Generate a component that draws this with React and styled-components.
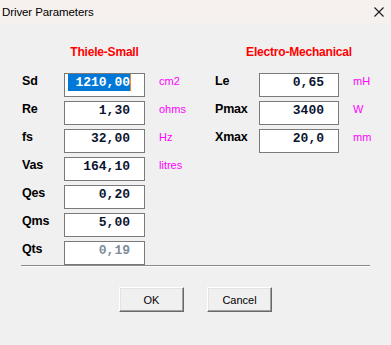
import React from "react";
import styled, { createGlobalStyle } from "styled-components";

const GlobalStyle = createGlobalStyle`
  html, body {
    margin: 0;
    padding: 0;
    background: #f0f0f0;
  }
`;

const leftParams = [
  { label: "Sd", value: " 1210,00", unit: "cm2", selected: true },
  { label: "Re", value: "    1,30", unit: "ohms" },
  { label: "fs", value: "   32,00", unit: "Hz" },
  { label: "Vas", value: "  164,10", unit: "litres" },
  { label: "Qes", value: "    0,20" },
  { label: "Qms", value: "    5,00" },
  { label: "Qts", value: "    0,19", muted: true },
];

const rightParams = [
  { label: "Le", value: "    0,65", unit: "mH" },
  { label: "Pmax", value: "    3400", unit: "W" },
  { label: "Xmax", value: "    20,0", unit: "mm" },
];

const App = () => {
  return (
    <Window>
      <GlobalStyle />
      <TitleBar>
        <Title>Driver Parameters</Title>
        <CloseIcon width="10" height="10" viewBox="0 0 10 10">
          <path d="M0.5 0.5 L9.5 9.5 M9.5 0.5 L0.5 9.5" stroke="#1a1a1a" strokeWidth="1.1" />
        </CloseIcon>
      </TitleBar>
      <Panels>
        <Section $width={193}>
          <Header $labelW={42} $boxW={81}>Thiele-Small</Header>
          {leftParams.map((p) => (
            <ParamRow key={p.label} $labelW={42} $boxW={81}>
              <Label>{p.label}</Label>
              <Field $muted={p.muted}>
                {p.selected ? <Selected>{p.value}</Selected> : p.value}
              </Field>
              <Unit>{p.unit}</Unit>
            </ParamRow>
          ))}
        </Section>
        <Section $width={170}>
          <Header $labelW={44} $boxW={80}>Electro-Mechanical</Header>
          {rightParams.map((p) => (
            <ParamRow key={p.label} $labelW={44} $boxW={80}>
              <Label>{p.label}</Label>
              <Field>{p.value}</Field>
              <Unit>{p.unit}</Unit>
            </ParamRow>
          ))}
        </Section>
      </Panels>
      <Separator />
      <Buttons>
        <Button>OK</Button>
        <Button>Cancel</Button>
      </Buttons>
    </Window>
  );
};

const Window = styled.div`
  width: 391px;
  height: 345px;
  background: #f0f0f0;
  overflow: hidden;
  font-family: "Liberation Sans", Arial, sans-serif;
`;

const TitleBar = styled.div`
  height: 23px;
  background: #f6f1ef;
  display: flex;
  align-items: center;
  justify-content: space-between;
  padding: 0 7px 0 2px;
`;

const Title = styled.span`
  font-size: 11.5px;
  color: #000;
  letter-spacing: -0.1px;
`;

const CloseIcon = styled.svg`
  display: block;
`;

const Panels = styled.div`
  display: flex;
  padding: 21px 0 0 22px;
  height: 221px;
`;

const Section = styled.div`
  width: ${(p) => p.$width}px;
  flex-shrink: 0;
  display: flex;
  flex-direction: column;
`;

const Header = styled.div`
  margin-left: ${(p) => p.$labelW}px;
  width: ${(p) => p.$boxW}px;
  display: flex;
  justify-content: center;
  white-space: nowrap;
  height: 16px;
  line-height: 16px;
  margin-bottom: 13px;
  color: #ff0000;
  font-weight: bold;
  font-size: 12px;
  letter-spacing: -0.2px;
`;

const ParamRow = styled.div`
  display: grid;
  grid-template-columns: ${(p) => p.$labelW}px ${(p) => p.$boxW}px auto;
  height: 24px;
  margin-bottom: 4px;
`;

const Label = styled.div`
  font-weight: bold;
  font-size: 12.5px;
  line-height: 17px;
  letter-spacing: -0.2px;
  color: #000;
`;

const Field = styled.div`
  box-sizing: border-box;
  height: 24px;
  border: 1px solid #7a7a7a;
  background: #fff;
  padding: 0 14px 0 0;
  text-align: right;
  white-space: pre;
  font-family: "Liberation Mono", "Courier New", monospace;
  font-weight: bold;
  font-size: 13px;
  line-height: 18px;
  color: ${(p) => (p.$muted ? "#7f8c9a" : "#0a1530")};
`;

const Selected = styled.span`
  display: inline-block;
  background: #0078d7;
  color: #fff;
  height: 17px;
  vertical-align: top;
  box-shadow: 1px 0 0 #f08a24;
`;

const Unit = styled.div`
  padding-left: 14px;
  color: #ff00ff;
  font-size: 11px;
  line-height: 17px;
`;

const Separator = styled.div`
  margin: 0 0 0 21px;
  width: 349px;
  height: 0;
  border-top: 1px solid #8a8a8a;
  border-bottom: 1px solid #fbfbfb;
`;

const Buttons = styled.div`
  display: flex;
  justify-content: center;
  gap: 23px;
  margin-top: 20px;
`;

const Button = styled.button`
  box-sizing: border-box;
  width: 65px;
  height: 25px;
  padding: 0;
  background: #f0f0f0;
  border: none;
  border-top: 1px solid #fff;
  border-left: 1px solid #fff;
  border-right: 1px solid #6a6a6a;
  border-bottom: 1px solid #6a6a6a;
  box-shadow: inset -1px -1px 0 #a0a0a0, inset 1px 1px 0 #e3e3e3;
  font-family: "Liberation Sans", Arial, sans-serif;
  font-size: 11px;
  color: #000;
`;

export default App;
